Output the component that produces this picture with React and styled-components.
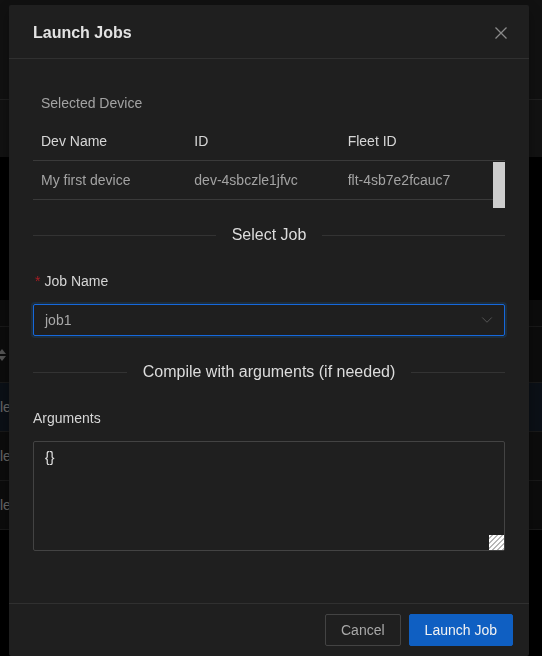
import React from "react";
import styled, { createGlobalStyle } from "styled-components";
import { ChevronDown } from "lucide-react";

const GlobalStyle = createGlobalStyle`
  html, body {
    margin: 0;
    padding: 0;
    background: #000;
    font-family: "Liberation Sans", Arial, sans-serif;
    font-size: 14px;
    overflow: hidden;
  }
  * { box-sizing: border-box; }
`;

/* page behind the dialog */

const Page = styled.div`
  width: 542px;
  height: 656px;
  background: #000;
`;

const TopCard = styled.div`
  height: 157px;
  background: #1f1f1f;
  display: flex;
  flex-direction: column;
`;

const TopBand = styled.div`
  height: ${({ h }) => h}px;
  border-bottom: ${({ line }) => (line ? "1px solid #3a3a3a" : "none")};
  background: ${({ bg }) => bg || "transparent"};
`;

const Gap = styled.div`
  height: ${({ h }) => h}px;
`;

const BgTable = styled.div`
  background: #161616;
  display: flex;
  flex-direction: column;
`;

const BgRow = styled.div`
  height: ${({ h }) => h}px;
  border-bottom: 1px solid #2e2e2e;
  background: ${({ selected }) => (selected ? "#141d29" : "transparent")};
  display: flex;
  align-items: center;
  color: #bdbdbd;
  font-size: 14px;
`;

const SortIcon = styled.svg`
  margin-left: -3px;
  color: #9a9a9a;
`;

const Mask = styled.div`
  position: fixed;
  inset: 0;
  background: rgba(0, 0, 0, 0.45);
`;

/* dialog */

const Modal = styled.div`
  position: fixed;
  top: 5px;
  left: 9px;
  width: 520px;
  background: #1f1f1f;
  border-radius: 2px;
  box-shadow: 0 3px 6px -4px rgba(0, 0, 0, 0.48), 0 6px 16px rgba(0, 0, 0, 0.32);
`;

const Header = styled.div`
  height: 54px;
  padding: 2px 24px 0;
  display: flex;
  align-items: center;
  justify-content: space-between;
  border-bottom: 1px solid #303030;
`;

const Title = styled.div`
  color: #e3e3e3;
  font-size: 16px;
  font-weight: 700;
  line-height: 22px;
`;

const Close = styled.button`
  background: none;
  border: none;
  padding: 0;
  margin-right: -3px;
  width: 14px;
  height: 14px;
  display: flex;
  color: #8a8a8a;
  cursor: pointer;
`;

const Body = styled.div`
  padding: 25px 24px 52px;
`;

const TableTitle = styled.div`
  padding: 8px 8px;
  line-height: 22px;
  color: #a3a3a3;
`;

const HeadRow = styled.div`
  display: grid;
  grid-template-columns: 1fr 1fr 1fr 12px;
  border-bottom: 1px solid #3a3a3a;
`;

const Cell = styled.div`
  padding: 8px;
  line-height: 22px;
  color: ${({ head }) => (head ? "#d6d6d6" : "#a3a3a3")};
  white-space: nowrap;
`;

const ScrollBody = styled.div`
  display: flex;
  height: 47px;
`;

const Rows = styled.div`
  flex: 1;
`;

const BodyRow = styled.div`
  display: grid;
  grid-template-columns: 1fr 1fr 1fr;
  border-bottom: 1px solid #3a3a3a;
`;

const Thumb = styled.div`
  width: 12px;
  height: 46px;
  margin-top: 1px;
  background: #cdcdcd;
`;

const Divider = styled.div`
  display: flex;
  align-items: center;
  gap: 16px;
  margin: ${({ mt }) => mt}px 0 ${({ mb }) => mb}px;
  color: #dcdcdc;
  font-size: 16px;
  line-height: 22px;
  white-space: nowrap;

  &::before,
  &::after {
    content: "";
    flex: 1;
    border-top: 1px solid #333;
  }
`;

const Label = styled.label`
  display: block;
  line-height: 22px;
  color: #d6d6d6;
  margin-bottom: 12px;
`;

const Required = styled.span`
  color: #a61d24;
  margin: 0 4px 0 2px;
`;

const Select = styled.div`
  height: 32px;
  border: 1px solid #1668dc;
  border-radius: 2px;
  box-shadow: 0 0 0 2px rgba(23, 125, 220, 0.15);
  padding: 0 11px;
  display: flex;
  align-items: center;
  justify-content: space-between;
  color: #a8a8a8;
`;

const Arrow = styled.span`
  display: flex;
  color: #5a5a5a;
  margin-right: -3px;
`;

const AreaWrap = styled.div`
  position: relative;
`;

const TextArea = styled.textarea`
  display: block;
  width: 100%;
  height: 110px;
  background: #1f1f1f;
  border: 1px solid #434343;
  border-radius: 2px;
  padding: 4px 11px;
  color: #e0e0e0;
  font-family: "Liberation Sans", Arial, sans-serif;
  font-size: 14px;
  line-height: 22px;
  resize: none;
  outline: none;
`;

const Grip = styled.div`
  position: absolute;
  right: 1px;
  bottom: 1px;
  width: 15px;
  height: 15px;
  background: repeating-linear-gradient(
    135deg,
    #ffffff 0 2px,
    #b8b8b8 2px 3.5px
  );
`;

const Footer = styled.div`
  border-top: 1px solid #303030;
  padding: 10px 16px 10px;
  display: flex;
  justify-content: flex-end;
  gap: 8px;
`;

const Button = styled.button`
  height: 32px;
  padding: 0 15px;
  border-radius: 2px;
  font-family: "Liberation Sans", Arial, sans-serif;
  font-size: 14px;
  cursor: pointer;
  border: 1px solid ${({ primary }) => (primary ? "#0f5fc2" : "#434343")};
  background: ${({ primary }) => (primary ? "#0f5fc2" : "transparent")};
  color: ${({ primary }) => (primary ? "#f2f2f2" : "#a8a8a8")};
`;

const devices = [
  { name: "My first device", id: "dev-4sbczle1jfvc", fleet: "flt-4sb7e2fcauc7" },
];

export default function App() {
  return (
    <>
      <GlobalStyle />
      <Page>
        <TopCard>
          <TopBand h={69} />
          <TopBand h={31} line />
          <TopBand h={57} bg="#212121" />
        </TopCard>
        <Gap h={143} />
        <BgTable>
          <BgRow h={27} />
          <BgRow h={56}>
            <SortIcon width="10" height="14" viewBox="0 0 10 14">
              <path d="M5 1 L9 6 L1 6 Z M1 8 L9 8 L5 13 Z" fill="currentColor" />
            </SortIcon>
          </BgRow>
          <BgRow h={49} selected>le</BgRow>
          <BgRow h={49}>le</BgRow>
          <BgRow h={49}>le</BgRow>
        </BgTable>
      </Page>
      <Mask />
      <Modal>
        <Header>
          <Title>Launch Jobs</Title>
          <Close aria-label="Close">
            <svg width="14" height="14" viewBox="0 0 14 14">
              <path d="M1.5 1.5 L12.5 12.5 M12.5 1.5 L1.5 12.5" stroke="currentColor" strokeWidth="1.3" fill="none" />
            </svg>
          </Close>
        </Header>
        <Body>
          <TableTitle>Selected Device</TableTitle>
          <HeadRow>
            <Cell head>Dev Name</Cell>
            <Cell head>ID</Cell>
            <Cell head>Fleet ID</Cell>
            <span />
          </HeadRow>
          <ScrollBody>
            <Rows>
              {devices.map((d) => (
                <BodyRow key={d.id}>
                  <Cell>{d.name}</Cell>
                  <Cell>{d.id}</Cell>
                  <Cell>{d.fleet}</Cell>
                </BodyRow>
              ))}
            </Rows>
            <Thumb />
          </ScrollBody>

          <Divider mt={16} mb={24}>Select Job</Divider>

          <Label>
            <Required>*</Required>Job Name
          </Label>
          <Select>
            <span>job1</span>
            <Arrow>
              <ChevronDown size={18} strokeWidth={1.2} />
            </Arrow>
          </Select>

          <Divider mt={25} mb={24}>Compile with arguments (if needed)</Divider>

          <Label>Arguments</Label>
          <AreaWrap>
            <TextArea defaultValue="{}" />
            <Grip />
          </AreaWrap>
        </Body>
        <Footer>
          <Button>Cancel</Button>
          <Button primary>Launch Job</Button>
        </Footer>
      </Modal>
    </>
  );
}
